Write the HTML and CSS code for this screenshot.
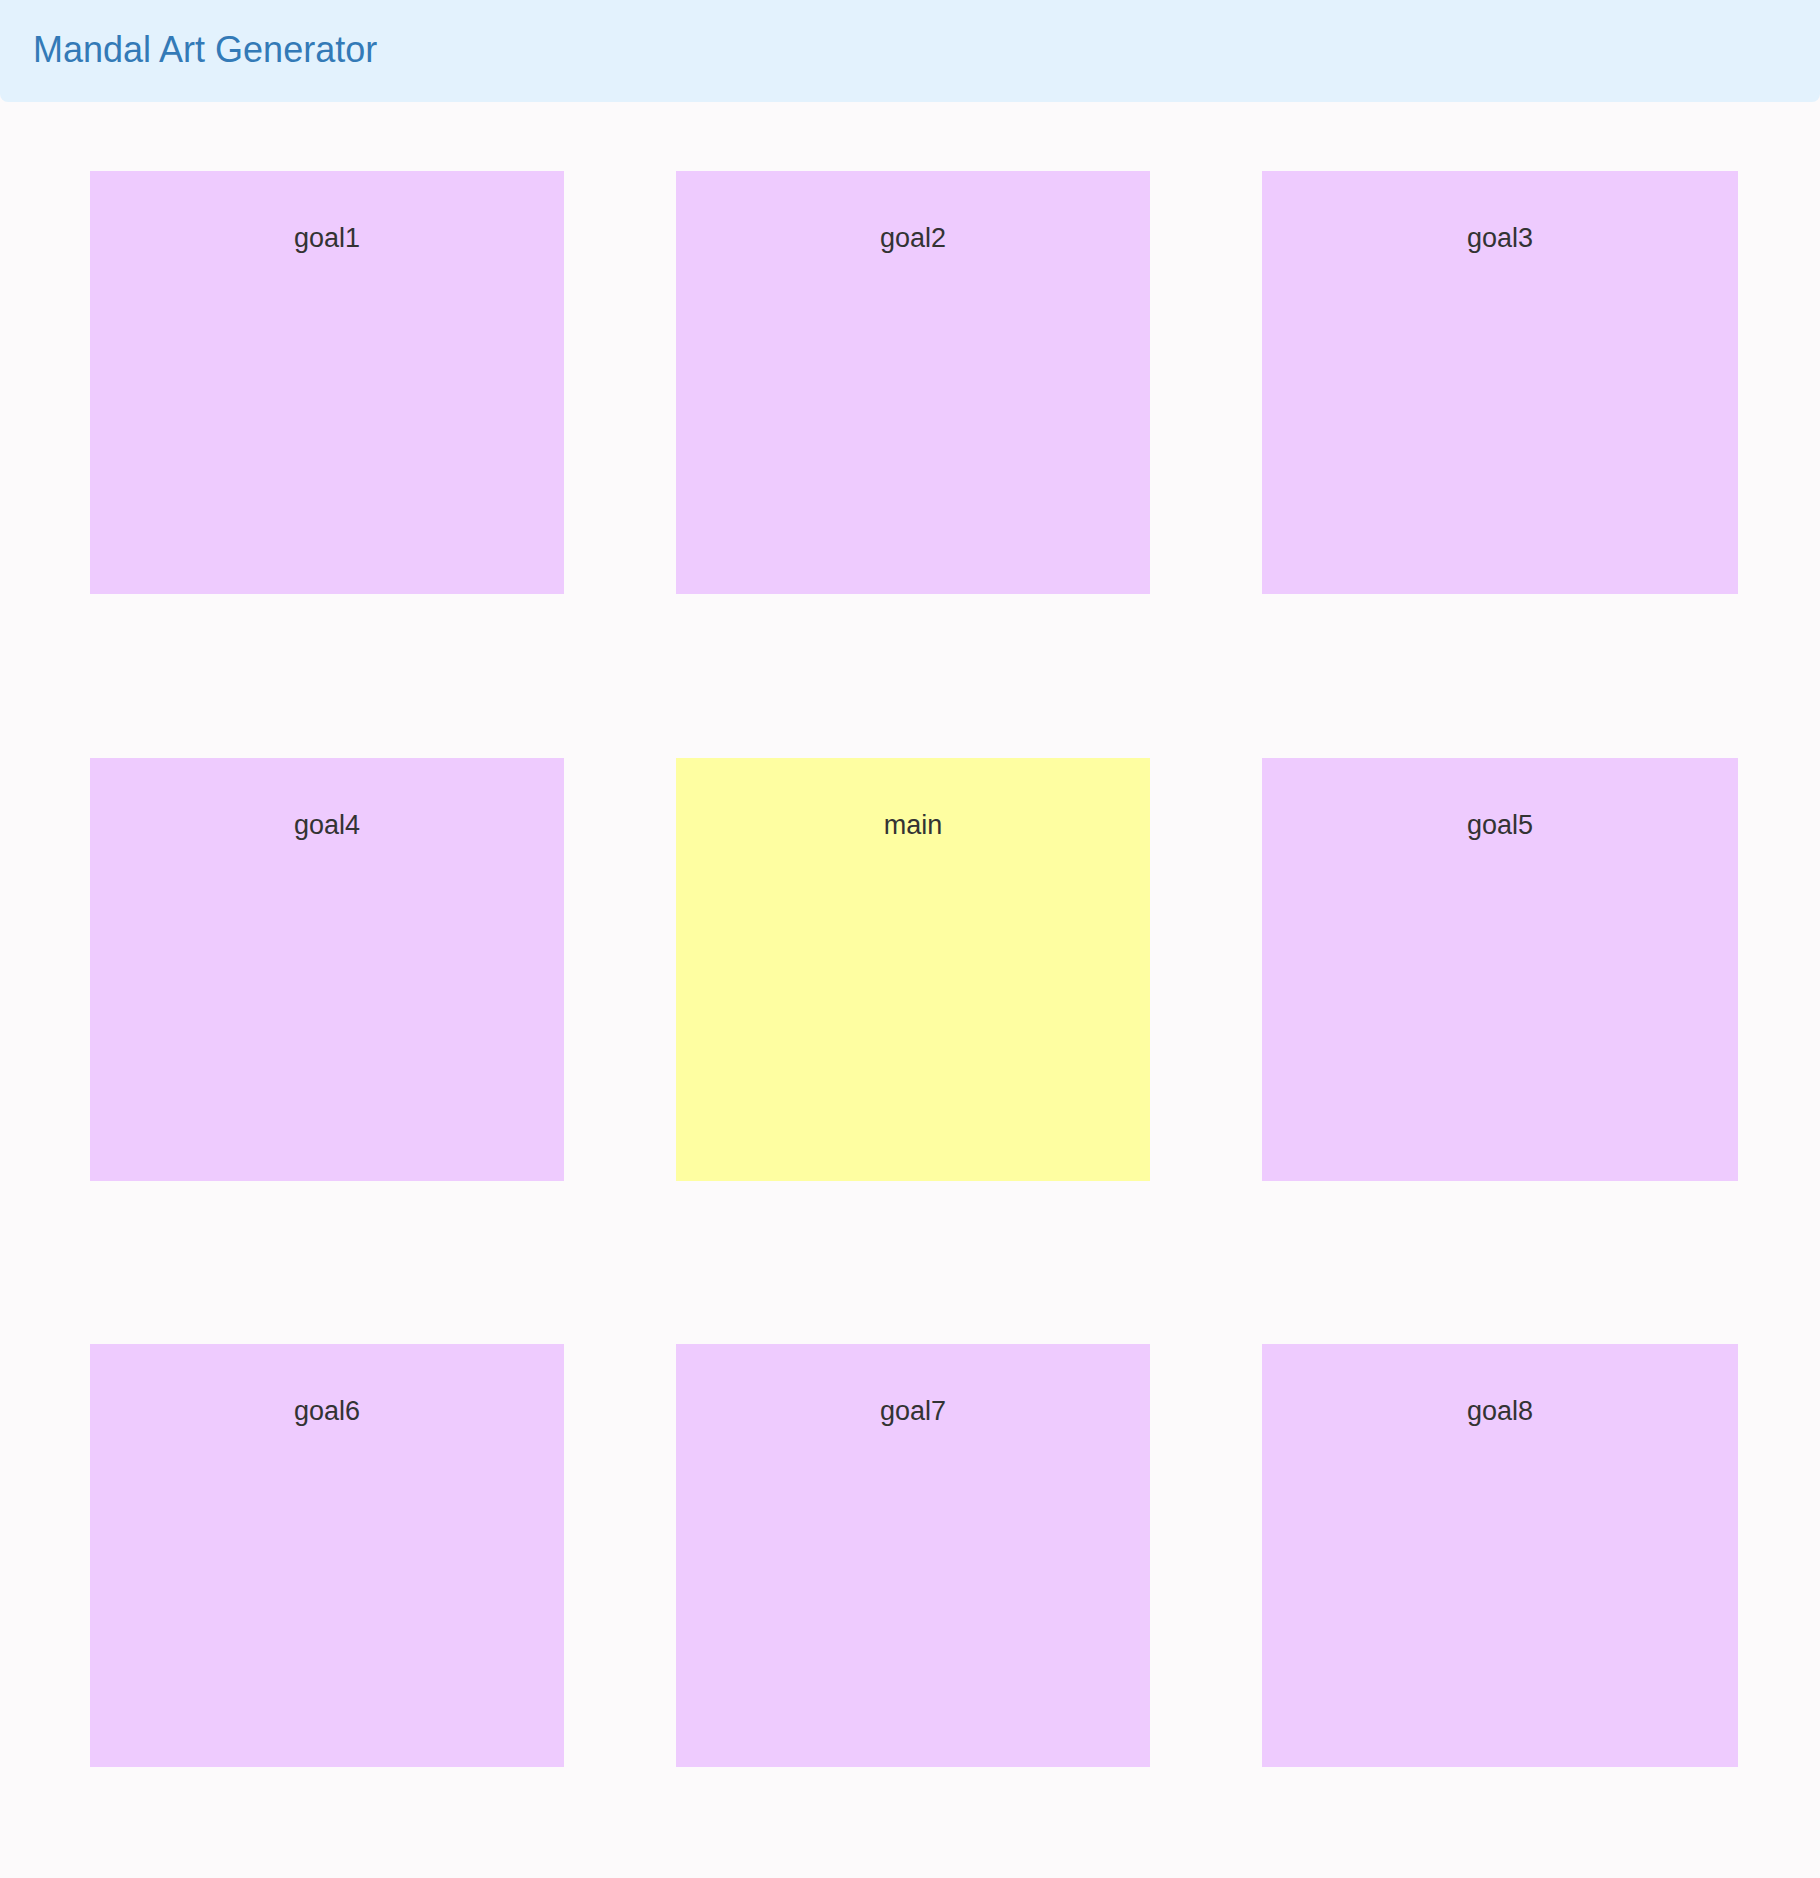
FILE: index.html
```html
<!DOCTYPE html>
<html>
<head>
<meta charset="utf-8">
<title>Mandal Art Generator</title>
<link rel="stylesheet" href="styles.css">
</head>
<body>
<header class="header">
  <h1 class="title">Mandal Art Generator</h1>
</header>
<main class="board">
  <div class="cell goal">goal1</div>
  <div class="cell goal">goal2</div>
  <div class="cell goal">goal3</div>
  <div class="cell goal">goal4</div>
  <div class="cell main-goal">main</div>
  <div class="cell goal">goal5</div>
  <div class="cell goal">goal6</div>
  <div class="cell goal">goal7</div>
  <div class="cell goal">goal8</div>
</main>
</body>
</html>
```
FILE: styles.css
```css
html, body {
  margin: 0;
  padding: 0;
}
body {
  background: #fcfafb;
  font-family: "Liberation Sans", Arial, Helvetica, sans-serif;
  color: #333333;
  min-height: 1878px;
}
.header {
  background: #e3f2fd;
  height: 102px;
  box-sizing: border-box;
  padding: 30px 33px 0;
  border-radius: 0 0 8px 8px;
}
.title {
  margin: 0;
  font-size: 36px;
  line-height: 40px;
  font-weight: normal;
  color: #337ab7;
}
.board {
  display: grid;
  grid-template-columns: 474px 474px 476px;
  grid-auto-rows: 423px;
  column-gap: 112px;
  row-gap: 163.5px;
  padding: 69px 0 0 90px;
}
.cell {
  box-sizing: border-box;
  padding-top: 52px;
  text-align: center;
  font-size: 27px;
  line-height: 30px;
  color: #333333;
}
.goal {
  background: #eecbfe;
}
.main-goal {
  background: #fefea1;
}
```
